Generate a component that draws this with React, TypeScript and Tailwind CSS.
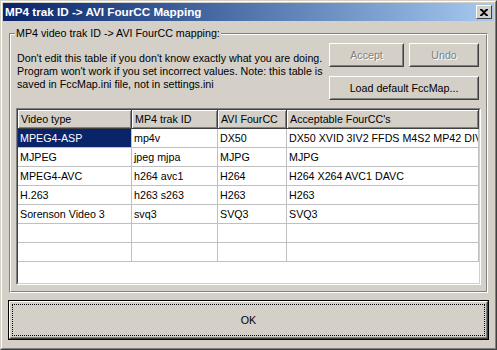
import React from "react";

const rows = [
  ["MPEG4-ASP", "mp4v", "DX50", "DX50 XVID 3IV2 FFDS M4S2 MP42 DIV3 DIVX DX40"],
  ["MJPEG", "jpeg mjpa", "MJPG", "MJPG"],
  ["MPEG4-AVC", "h264 avc1", "H264", "H264 X264 AVC1 DAVC"],
  ["H.263", "h263 s263", "H263", "H263"],
  ["Sorenson Video 3", "svq3", "SVQ3", "SVQ3"],
  ["", "", "", ""],
  ["", "", "", ""],
];

const columns = [
  { label: "Video type", width: "w-[114px]" },
  { label: "MP4 trak ID", width: "w-[86px]" },
  { label: "AVI FourCC", width: "w-[69px]" },
  { label: "Acceptable FourCC's", width: "w-[192px]" },
];

function Button({
  children,
  className = "",
  disabled = false,
}: {
  children: React.ReactNode;
  className?: string;
  disabled?: boolean;
}) {
  return (
    <div
      className={`border border-t-white border-l-white border-r-[#404040] border-b-[#404040] ${className}`}
    >
      <div className="h-full border border-t-[#D4D0C8] border-l-[#D4D0C8] border-r-[#808080] border-b-[#808080] flex items-center justify-center">
        <span
          className={
            disabled
              ? "text-[#808080] [text-shadow:1px_1px_0_#fff]"
              : "text-black"
          }
        >
          {children}
        </span>
      </div>
    </div>
  );
}

export default function App() {
  return (
    <div className="w-[497px] h-[350px] bg-[#D4D0C8] border border-t-[#D4D0C8] border-l-[#D4D0C8] border-r-[#404040] border-b-[#404040] font-['Liberation_Sans',Arial,sans-serif] text-[10.7px] text-black">
      <div className="h-full border border-t-white border-l-white border-r-[#808080] border-b-[#808080] p-[1px] flex flex-col">
        {/* Title bar */}
        <div className="h-[18px] shrink-0 flex items-center justify-between pl-[2px] pr-[2px] bg-linear-to-r from-[#0A246A] to-[#A6CAF0]">
          <span className="text-white font-bold text-[11.7px] whitespace-nowrap">
            MP4 trak ID -&gt; AVI FourCC Mapping
          </span>
          <div className="w-[16px] h-[14px] bg-[#D4D0C8] border border-t-white border-l-white border-r-[#404040] border-b-[#404040] flex items-center justify-center">
            <svg width="8" height="7" viewBox="0 0 8 7">
              <path
                d="M0 0h2l2 2 2-2h2v1L5 3.5 8 6v1H6L4 5 2 7H0V6l3-2.5L0 1z"
                fill="#000"
              />
            </svg>
          </div>
        </div>

        {/* Body */}
        <div className="flex-1 flex flex-col px-[6px] pt-[12px]">
          {/* Group box */}
          <div className="relative h-[260px] shrink-0 border border-t-[#808080] border-l-[#808080] border-r-white border-b-white">
            <span className="absolute left-[5px] top-[-7px] px-[1px] bg-[#D4D0C8] leading-[13px] whitespace-nowrap">
              MP4 video trak ID -&gt; AVI FourCC mapping:
            </span>
            <div className="h-full border border-t-white border-l-white border-r-[#808080] border-b-[#808080] px-[5px] flex flex-col">
              <div className="h-[73px] shrink-0 flex justify-between">
                <p className="mt-[17px] ml-[1px] leading-[13px] whitespace-nowrap">
                  Don't edit this table if you don't know exactly what you are doing.
                  <br />
                  Program won't work if you set incorrect values. Note: this table is
                  <br />
                  saved in FccMap.ini file, not in settings.ini
                </p>
                <div className="mt-[8px] mr-[2px] w-[150px] flex flex-col gap-[9px]">
                  <div className="flex gap-[5px]">
                    <Button disabled className="w-[75px] h-[24px]">
                      Accept
                    </Button>
                    <Button disabled className="w-[70px] h-[24px]">
                      Undo
                    </Button>
                  </div>
                  <Button className="w-[150px] h-[24px]">Load default FccMap...</Button>
                </div>
              </div>

              {/* Table */}
              <div className="h-[177px] shrink-0 border border-t-[#808080] border-l-[#808080] border-r-white border-b-white">
                <div className="h-full border border-t-[#404040] border-l-[#404040] border-r-[#D4D0C8] border-b-[#D4D0C8] bg-white overflow-hidden">
                  <div className="flex h-[19px]">
                    {columns.map((col) => (
                      <div
                        key={col.label}
                        className={`${col.width} shrink-0 h-full bg-[#D4D0C8] border-r border-b border-r-[#404040] border-b-[#404040] shadow-[inset_1px_1px_0_#fff,inset_-1px_-1px_0_#808080] pl-[3px] flex items-center whitespace-nowrap overflow-hidden`}
                      >
                        {col.label}
                      </div>
                    ))}
                  </div>
                  {rows.map((row, ri) => (
                    <div key={ri} className="flex h-[19px]">
                      {row.map((cell, ci) => {
                        const selected = ri === 0 && ci === 0;
                        return (
                          <div
                            key={ci}
                            className={`${columns[ci].width} shrink-0 h-full border-r border-b border-[#C0C0C0] pl-[2px] flex items-center whitespace-nowrap overflow-hidden ${
                              selected ? "bg-[#0A246A] text-white" : ""
                            }`}
                          >
                            {cell}
                          </div>
                        );
                      })}
                    </div>
                  ))}
                </div>
              </div>
            </div>
          </div>

          {/* OK button */}
          <div className="mt-[7px] mx-[-1px] h-[40px] shrink-0 border border-black">
            <div className="h-full border border-t-white border-l-white border-r-[#404040] border-b-[#404040]">
              <div className="h-full border border-t-[#D4D0C8] border-l-[#D4D0C8] border-r-[#808080] border-b-[#808080] p-[1px]">
                <div className="h-full border border-dotted border-black flex items-center justify-center">
                  OK
                </div>
              </div>
            </div>
          </div>
        </div>
      </div>
    </div>
  );
}
